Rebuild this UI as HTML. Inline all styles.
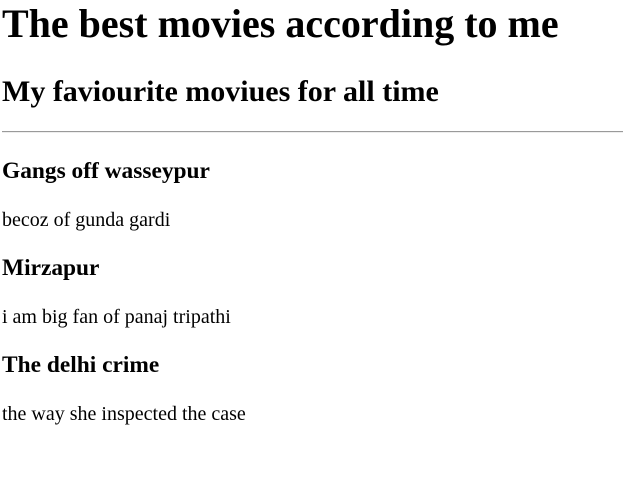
<!DOCTYPE html>
<html><head><style>
body{margin:0;width:623px;height:482px;background:#fff;font-family:"Liberation Serif",serif;color:#000;position:relative;overflow:hidden}
div{position:absolute;left:2px;line-height:1;white-space:nowrap}
.h1{font-size:40px;font-weight:bold}
.h2{font-size:30px;font-weight:bold}
.h3{font-size:23.4px;font-weight:bold}
.p{font-size:20px}
.hr{left:2px;right:0;top:131px;height:0;border-top:1px solid #9a9a9a;border-bottom:1px solid #eee}
</style></head><body>
<div class="h1" style="top:3.5px">The best movies according to me</div>
<div class="h2" style="top:77px">My faviourite moviues for all time</div>
<div class="hr"></div>
<div class="h3" style="top:160px">Gangs off wasseypur</div>
<div class="p" style="top:210px">becoz of gunda gardi</div>
<div class="h3" style="top:257px">Mirzapur</div>
<div class="p" style="top:307px">i am big fan of panaj tripathi</div>
<div class="h3" style="top:354px">The delhi crime</div>
<div class="p" style="top:404px">the way she inspected the case</div>
</body></html>
